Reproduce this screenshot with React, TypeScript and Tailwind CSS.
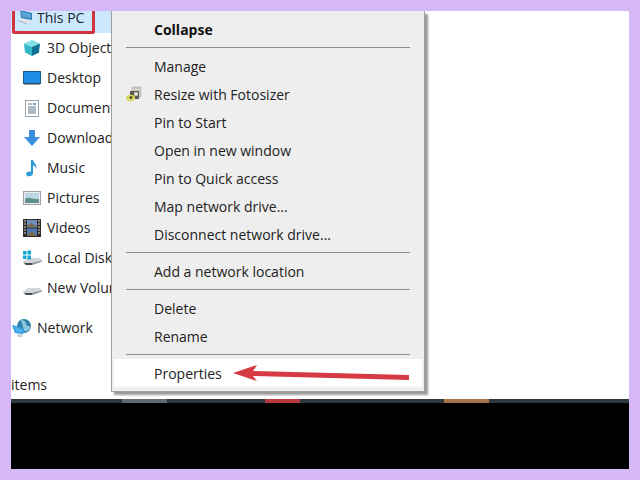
const FONT = "font-['Open_Sans',sans-serif]"

// ─── Sidebar icons ────────────────────────────────────────────────────────────

function PcIcon() {
  return (
    <svg width="18" height="18" viewBox="0 0 18 18">
      <path d="M3 1 L15 4 L15 11 L4 9 Z" fill="#2f7fb5" />
      <path d="M4 2.5 L14 5 L14 9.5 L5 7.8 Z" fill="#5aa5d8" />
      <path d="M1 11 L5 9.5 L15 11.5 L10 14.5 Z" fill="#dfe3e6" />
      <path d="M1 11 L10 14.5 L10 15.5 L1 12 Z" fill="#aab3b8" />
    </svg>
  )
}

function CubeIcon() {
  return (
    <svg width="18" height="18" viewBox="0 0 18 18">
      <path d="M9 1 L17 4.5 L9 8 L1 4.5 Z" fill="#7fe0e6" />
      <path d="M1 4.5 L9 8 L9 17 L2 13.5 Z" fill="#35b7c6" />
      <path d="M17 4.5 L9 8 L9 17 L16 13.5 Z" fill="#0f6f95" />
    </svg>
  )
}

function DesktopIcon() {
  return (
    <svg width="18" height="14" viewBox="0 0 18 14">
      <rect x="0.5" y="0.5" width="17" height="12" fill="#1c8ee6" stroke="#16608f" />
      <rect x="1" y="12" width="16" height="1.5" fill="#2a4a60" />
    </svg>
  )
}

function DocIcon() {
  return (
    <svg width="14" height="17" viewBox="0 0 14 17">
      <rect x="0.5" y="0.5" width="13" height="16" fill="#fff" stroke="#9aa3a8" />
      <path d="M3 4 H7 M3 7 H11 M3 9 H11 M3 11 H11 M3 13 H11" stroke="#60788a" />
      <rect x="8" y="3" width="3" height="2" fill="#6fa8cc" />
    </svg>
  )
}

function DownloadIcon() {
  return (
    <svg width="16" height="18" viewBox="0 0 16 18">
      <path d="M5 1 H11 V8 H16 L8 17 L0 8 H5 Z" fill="#3b8edb" />
    </svg>
  )
}

function MusicIcon() {
  return (
    <svg width="13" height="18" viewBox="0 0 13 18">
      <path d="M6 1 H8 C8.5 4 12.5 5.5 11.5 10 C11 7.5 9.5 6.5 8 6.5 V14 C8 16.5 5.5 17.5 3.2 17.2 C0.8 16.8 0.5 14 2.5 13 C4 12.2 5 12.3 6 12.8 Z" fill="#2a9ad6" />
    </svg>
  )
}

function PictureIcon() {
  return (
    <svg width="18" height="14" viewBox="0 0 18 14">
      <rect x="0.5" y="0.5" width="17" height="13" fill="#e8eaec" stroke="#9aa3a8" />
      <rect x="2" y="2" width="14" height="10" fill="#bcd6e6" />
      <path d="M2 8 C6 5 10 9 16 8 V12 H2 Z" fill="#5f8f8a" />
    </svg>
  )
}

function VideoIcon() {
  return (
    <svg width="18" height="18" viewBox="0 0 18 18">
      <rect width="18" height="18" fill="#2e2c2a" />
      <rect x="4" y="1" width="10" height="7.5" fill="#6d8fc0" />
      <rect x="4" y="9.5" width="10" height="7.5" fill="#4e78b8" />
      <path d="M4 7 L8 4 L14 8 H4 Z M4 16 L9 12 L14 17 H4 Z" fill="#7a6a4a" />
      <path d="M1 2 H3 M1 5 H3 M1 8 H3 M1 11 H3 M1 14 H3 M15 2 H17 M15 5 H17 M15 8 H17 M15 11 H17 M15 14 H17" stroke="#d8d8d8" />
    </svg>
  )
}

function DriveIcon({ windows }: { windows?: boolean }) {
  return (
    <svg width="20" height="16" viewBox="0 0 20 16">
      <path d="M1 12 L6 8 H18 L20 11 L10 15 H4 Z" fill="#d2d5d8" />
      <path d="M1 12 L4 15 H10 L10 13 H3 Z" fill="#4a4e52" />
      <path d="M10 13 L20 10.5 V11.5 L10 15 Z" fill="#8b8f92" />
      {windows && (
        <g fill="#16a8d0">
          <rect x="1" y="1" width="3.5" height="3.5" />
          <rect x="5.5" y="0.5" width="3.5" height="4" />
          <rect x="1" y="5.5" width="3.5" height="3.5" />
          <rect x="5.5" y="5.5" width="3.5" height="4" />
        </g>
      )}
    </svg>
  )
}

function NetworkIcon() {
  return (
    <svg width="20" height="19" viewBox="0 0 20 19">
      <circle cx="12" cy="7" r="7" fill="#2f7fa8" />
      <path d="M9 1 C12 1 15 3 14 6 L19 8 C18 11 15 13 12 12 Z" fill="#8ec4de" />
      <path d="M0 6 L8 8 L13 12 L11 15 L3 14 Z" fill="#2d9be6" />
      <path d="M2 7.5 L7.5 9 L11 12 L10 13.5 L4 12.5 Z" fill="#55b4f0" />
      <path d="M5 15 L11 15.5 L10 18 H6 Z" fill="#c5ccd2" />
    </svg>
  )
}

function FotosizerIcon() {
  return (
    <svg width="16" height="16" viewBox="0 0 16 16">
      <rect x="6" y="1" width="9" height="10" fill="#d0d0c8" stroke="#9a9a94" strokeWidth="0.5" />
      <rect x="4" y="5" width="9" height="8" fill="#5a5a50" />
      <circle cx="10" cy="8" r="2" fill="#e8e8e0" />
      <ellipse cx="4.5" cy="12" rx="4.5" ry="3.2" fill="#d8d860" />
      <circle cx="5" cy="11.5" r="1.3" fill="#2f2f20" />
    </svg>
  )
}

// ─── Sidebar ──────────────────────────────────────────────────────────────────

const TREE_ITEMS = [
  { label: '3D Objects', icon: <CubeIcon /> },
  { label: 'Desktop', icon: <DesktopIcon /> },
  { label: 'Documents', icon: <DocIcon /> },
  { label: 'Downloads', icon: <DownloadIcon /> },
  { label: 'Music', icon: <MusicIcon /> },
  { label: 'Pictures', icon: <PictureIcon /> },
  { label: 'Videos', icon: <VideoIcon /> },
  { label: 'Local Disk (C:)', icon: <DriveIcon windows /> },
  { label: 'New Volume (D:)', icon: <DriveIcon /> },
]

function Sidebar() {
  return (
    <div className="w-[100px] shrink-0 overflow-hidden whitespace-nowrap text-[14px] text-[#222]">
      <div className="flex h-[22px] items-center bg-[#cce8ff] pb-[8px]">
        <span className="flex w-[26px] justify-end pr-[2px]"><PcIcon /></span>
        <span className="pb-[2px]">This PC</span>
      </div>
      {TREE_ITEMS.map((item) => (
        <div key={item.label} className="flex h-[30px] items-center">
          <span className="flex w-[36px] shrink-0 justify-center pl-[5px]">{item.icon}</span>
          <span className="pb-[2px]">{item.label}</span>
        </div>
      ))}
      <div className="mt-[10px] flex h-[30px] items-center">
        <span className="flex w-[26px] shrink-0 justify-start pl-[1px]"><NetworkIcon /></span>
        <span className="pb-[2px]">Network</span>
      </div>
      <div className="mt-[32px] leading-[20px]">items</div>
    </div>
  )
}

// ─── Context menu ─────────────────────────────────────────────────────────────

function MenuRow({ label, bold, icon, active }: { label: string; bold?: boolean; icon?: React.ReactNode; active?: boolean }) {
  return (
    <div className={`mx-[2px] flex h-[28px] items-center ${active ? 'bg-white' : ''}`}>
      <span className="flex w-[40px] shrink-0 justify-end pr-[12px]">{icon}</span>
      <span className={bold ? 'font-bold text-[#111]' : ''}>{label}</span>
    </div>
  )
}

function Separator() {
  return (
    <div className="flex h-[9px] items-center px-[14px]">
      <div className="h-px w-full bg-[#8e8e8e]" />
    </div>
  )
}

function ContextMenu() {
  return (
    <div className="z-10 w-[314px] shrink-0 self-start border border-t-0 border-[#a0a0a0] bg-[#eeeeee] pb-[4px] pt-[4px] text-[14px] text-[#222] shadow-[3px_3px_2px_#9a9a9a]">
      <MenuRow label="Collapse" bold />
      <Separator />
      <MenuRow label="Manage" />
      <MenuRow label="Resize with Fotosizer" icon={<FotosizerIcon />} />
      <MenuRow label="Pin to Start" />
      <MenuRow label="Open in new window" />
      <MenuRow label="Pin to Quick access" />
      <MenuRow label="Map network drive..." />
      <MenuRow label="Disconnect network drive..." />
      <Separator />
      <MenuRow label="Add a network location" />
      <Separator />
      <MenuRow label="Delete" />
      <MenuRow label="Rename" />
      <Separator />
      <MenuRow label="Properties" active />
    </div>
  )
}

// ─── Page ─────────────────────────────────────────────────────────────────────

export default function App() {
  return (
    <div className={`relative flex h-[480px] w-[640px] overflow-hidden bg-[#d6b8f8] p-[11px] ${FONT}`}>
      <div className="flex min-w-0 flex-1 flex-col">
        <div className="flex h-[388px] bg-white">
          <Sidebar />
          <ContextMenu />
        </div>
        {/* taskbar edge */}
        <div className="flex h-[4px] bg-[#2b3a40]">
          <div className="ml-[111px] w-[45px] bg-[#5f6b70]" />
          <div className="ml-[98px] w-[35px] bg-[#b83a3f]" />
          <div className="ml-[144px] w-[45px] bg-[#a8734a]" />
        </div>
        <div className="flex-1 bg-black" />
      </div>

      {/* annotations drawn over the screenshot */}
      <div className="absolute left-[12px] top-[11px] h-[23px] w-[83px] rounded-b-[3px] border-[3px] border-t-0 border-[#d1343f]" />
      <svg className="absolute left-0 top-0 z-20" width="640" height="480" viewBox="0 0 640 480">
        <path d="M233 373 L257 365 L253 371 L409 375 L409 380 L253 376 L257 381 Z" fill="#d63a42" />
      </svg>
    </div>
  )
}
